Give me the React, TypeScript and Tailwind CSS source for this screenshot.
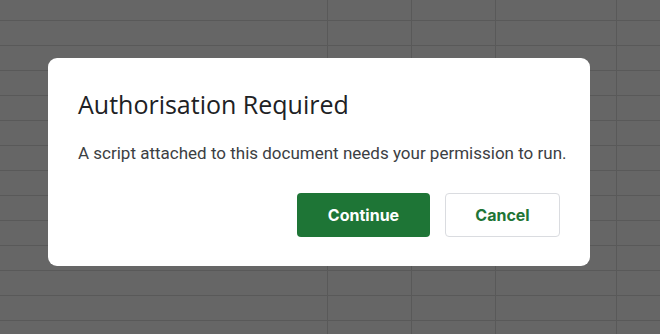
const cols = [327, 411, 495, 616];

export default function App() {
  const rows = Array.from({ length: 13 }, (_, i) => 20 + i * 25);

  return (
    <div className="relative w-[660px] h-[334px] overflow-hidden bg-[#666666]">
      {/* sheet grid behind the dialog */}
      <svg className="absolute inset-0" width="660" height="334">
        {rows.map((y) => (
          <line key={y} x1="0" x2="660" y1={y + 0.5} y2={y + 0.5} stroke="#595959" strokeWidth="1" />
        ))}
        {cols.map((x) => (
          <line key={x} x1={x + 0.5} x2={x + 0.5} y1="0" y2="334" stroke="#595959" strokeWidth="1" />
        ))}
      </svg>

      <div className="relative flex h-full items-start pl-[48px] pt-[58px]">
        <div className="w-[542px] h-[208px] rounded-[9px] bg-white px-[30px] pt-[30px] font-['Roboto',sans-serif]">
          <h1 className="text-[25px] leading-[32px] text-[#202124] font-['Open_Sans',sans-serif]">
            Authorisation Required
          </h1>
          <p className="mt-[22px] whitespace-nowrap text-[17px] leading-[22px] text-[#3c4043]">
            A script attached to this document needs your permission to run.
          </p>
          <div className="mt-[29px] flex justify-end gap-[15px] font-['Inter',sans-serif] text-[16px] font-bold">
            <button className="h-[44px] w-[133px] rounded-[4px] bg-[#1e7536] text-white">
              Continue
            </button>
            <button className="h-[44px] w-[115px] rounded-[4px] border border-[#dadce0] bg-white text-[#1e7536]">
              Cancel
            </button>
          </div>
        </div>
      </div>
    </div>
  );
}
